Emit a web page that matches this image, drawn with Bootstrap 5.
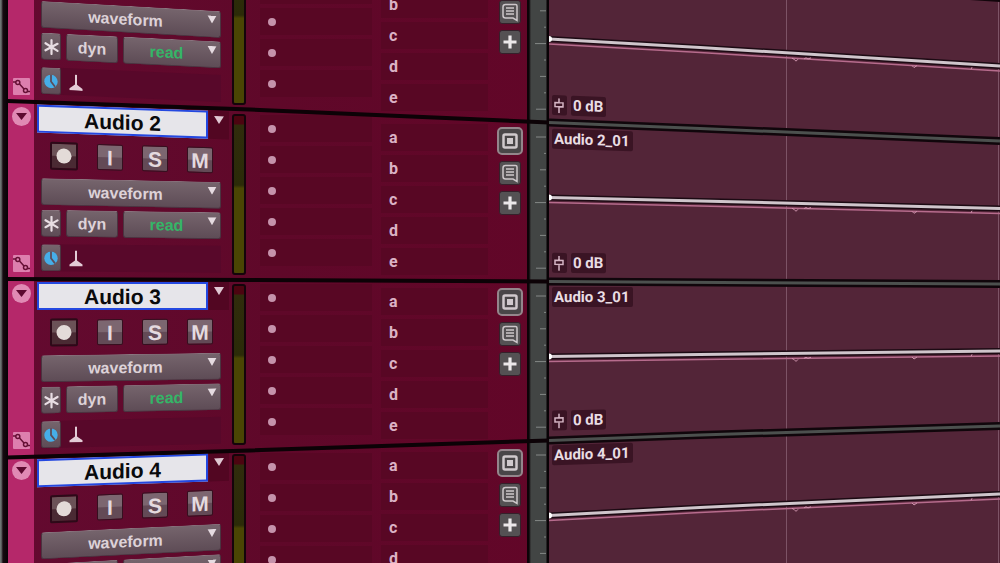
<!DOCTYPE html>
<html lang="en">
<head>
<meta charset="utf-8">
<meta name="viewport" content="width=device-width, initial-scale=1">
<title>Edit window</title>
<link href="https://cdn.jsdelivr.net/npm/bootstrap@5.3.0/dist/css/bootstrap.min.css" rel="stylesheet">
<style>
  body { background: #120309; font-family: "Liberation Sans", Arial, sans-serif; overflow: hidden; }
  .editor { height: 100vh; overflow: hidden; }
  .console { background: linear-gradient(90deg, #640a30, #5f0829 50%, #620628); }
  .edge-bar { width: 8px; background: linear-gradient(90deg, #6d7472 0 1px, #160a10 3px, #060205); }

  /* every column repeats its own track pitch */
  .strip { width: 26px; background: #b5286a; }
  .strip .lane { height: 177px; padding-bottom: 12px; }
  .strip-first { margin-top: -70px; }
  .controls { width: 195px; }
  .controls .lane { height: 174px; padding-left: 3px; }
  .controls-first { margin-top: -66px; }
  .head-gap { height: 72px; }
  .meters { width: 20px; padding-left: 3px; }
  .meters .lane { height: 170px; }
  .meters-first { margin-top: -56px; }
  .inserts { width: 131px; padding-left: 7px; }
  .inserts .lane { height: 169px; }
  .inserts-first { margin-top: -54px; }
  .sends { width: 116px; padding-left: 1px; }
  .sends .lane { height: 164px; }
  .sends-first { margin-top: -40px; }
  .tools { width: 31px; }
  .tools .lane { height: 161px; gap: 6px; }
  .tools-first { margin-top: -34px; }
  .ruler { width: 22px; background: linear-gradient(90deg, #0b0307 0 2px, #424544 4px 19px, #080205 20px); }
  .ruler svg { display: block; width: 22px; height: 159px; }
  .ruler-first { margin-top: -36px; }
  .clips { background: #532538; }
  .clips .lane { height: 157px; padding: 8px 0 6px 3px; }
  .clips-first { margin-top: -35px; }

  .round-toggle { width: 19px; height: 19px; background: #e08ab4; border-radius: 50%; }
  .auto-toggle { width: 17px; height: 17px; background: #dd7fae; border-radius: 1px; }
  .plain-btn { border: 0; padding: 0; line-height: 1; display: flex; align-items: center; justify-content: center; }

  .name-box { width: 171px; height: 28px; background: #e6e5ea; border: 2px solid #2448e0; font-size: 21px; font-weight: 700; color: #0a0a0c; line-height: 24px; padding: 1px 0 0; outline: 0; border-radius: 0; text-align: center; }
  .name-menu { width: 20px; height: 28px; background: #520622; align-items: flex-start; padding-top: 5px; }
  .keys { padding: 0 16px 0 13px; }
  .key { width: 26px; height: 26px; color: #e4dadf; font-size: 21px; font-weight: 700; border: 1px solid #35101f; border-radius: 2px; background: linear-gradient(#7c6670 0 48%, #634a56 52%); }
  .key-rec { background: linear-gradient(#6b5257 0 48%, #4a2a33 52%); border: 2px solid #2c0a18; width: 28px; height: 28px; }
  .ctl-row { width: 180px; margin-left: 4px; }
  .ctl-modes { gap: 5px; }
  .grey-box { height: 27px; border: 1px solid #4a3440; border-top-color: #8a7780; border-radius: 3px; background-color: #6a5660; background-image: linear-gradient(#75646c, #5e4c56); color: #ddd2d8; font-size: 16px; font-weight: 700; }
  .box-sm { width: 20px; }
  .box-md { width: 52px; }
  .drop { appearance: none; text-align: center; text-align-last: center; padding: 0 11px 0 0; line-height: 24px;
    background-image: url("data:image/svg+xml,%3Csvg xmlns='http://www.w3.org/2000/svg' viewBox='0 0 10 9'%3E%3Cpath d='M0 0h10L5 9z' fill='%23e6dbe1'/%3E%3C/svg%3E"), linear-gradient(#75646c, #5e4c56);
    background-repeat: no-repeat; background-position: right 3px top 4px, 0 0; background-size: 10px 8px, 100% 100%; }
  .drop-read { color: #35b567; }
  .clock-row { padding-top: 3px; }
  .clock-panel { background: #58082a; }
  .meter { width: 14px; height: 161px; border: 2px solid #14040a; border-radius: 3px; background: linear-gradient(#4c0410 0 8px, #302c0c 9px, #2b2b08 44%, #4a4503 46%, #4a4503); }

  .slot { height: 31px; }
  .slot-cell { height: 27px; background: #580724; }
  .pin { width: 8px; height: 8px; border-radius: 50%; background: #c593ab; }
  .send-letter { font: 700 16px/27px Roboto, "Liberation Sans", sans-serif; color: #dbb2c5; }
  .tool { width: 22px; height: 24px; background: #545153; border: 1px solid #35202a; border-radius: 3px; }
  .tool-io { width: 26px; height: 28px; background: #494648; border: 2px solid #94868c; border-radius: 5px; }

  .clip-tag { background: #3a1424; border-radius: 2px; color: #e9dde3; font: 700 15px/20px Roboto, "Liberation Sans", sans-serif; height: 20px; padding: 0 3px 0 2px; width: max-content; }
  .gain-row { width: max-content; }
  .clip-art { height: 563px; pointer-events: none; }
</style>
</head>
<body>
<main class="editor d-flex position-relative">
  <div class="console d-flex align-items-start flex-shrink-0 position-relative">
    <div class="edge-bar align-self-stretch"></div>
    <div class="strip align-self-stretch"><div class="strip-first" id="strip"></div></div>
    <div class="controls"><div class="controls-first" id="controls"></div></div>
    <div class="meters"><div class="meters-first" id="meters"></div></div>
    <div class="inserts"><div class="inserts-first" id="inserts"></div></div>
    <div class="sends"><div class="sends-first" id="sends"></div></div>
    <div class="tools"><div class="tools-first" id="tools"></div></div>
    <div class="ruler align-self-stretch"><div class="ruler-first" id="ruler"></div></div>
    <svg class="clip-art position-absolute top-0 start-0 w-100" viewBox="0 0 549 563" preserveAspectRatio="none" aria-hidden="true">
      <g fill="none" stroke="#0c0206" stroke-width="4">
        <path d="M7 101L250 109.500L549 122.500"/><path d="M7 279L250 280L549 281.500"/><path d="M7 457.500L250 450.500L549 440.500"/>
      </g>
    </svg>
  </div>
  <section class="clips flex-grow-1 position-relative overflow-hidden">
    <svg class="clip-art position-absolute top-0 start-0 w-100" viewBox="549 0 451 563" preserveAspectRatio="none" aria-hidden="true">
      <g stroke="#7d5366"><path d="M786.500 0V563M998.500 0V563"/></g>
      <path d="M970 -1L1000 1" stroke="#12050b" stroke-width="2"/>
      <g fill="none" stroke="#10060b" stroke-width="8">
        <path d="M549 122.500L700 128.500L1000 141"/><path d="M549 281.500L1000 284"/><path d="M549 440.500L700 435L1000 426"/>
      </g>
      <g fill="none" stroke="#4c504e" stroke-width="3">
        <path d="M549 122.500L700 128.500L1000 141"/><path d="M549 281.500L1000 284"/><path d="M549 440.500L700 435L1000 426"/>
      </g>
      <g id="curves" fill="none"></g>
    </svg>
    <div class="clips-first position-relative" id="clips"></div>
  </section>
</main>

<script src="https://cdn.jsdelivr.net/npm/bootstrap@5.3.0/dist/js/bootstrap.bundle.min.js"></script>
<script>
  // track 1 is scrolled half out at the top, track 4 runs out at the bottom
  const tracks = [
    { n: 1, head: false, sends: ['', 'b', 'c', 'd', 'e'], gain: true },
    { n: 2, head: true, sends: ['a', 'b', 'c', 'd', 'e'], gain: true },
    { n: 3, head: true, sends: ['a', 'b', 'c', 'd', 'e'], gain: true },
    { n: 4, head: true, sends: ['a', 'b', 'c', 'd'], gain: false, last: true }
  ];
  const fill = (id, draw) => { document.getElementById(id).innerHTML = tracks.map(draw).join(''); };

  fill('strip', ({ n }) => `
    <div class="lane d-flex flex-column align-items-center justify-content-between">
      <button class="plain-btn round-toggle" aria-label="Collapse track ${n}"><svg width="11" height="7" viewBox="0 0 11 7"><path d="M0 0h11L5.500 7z" fill="#5c0a30"/></svg></button>
      <button class="plain-btn auto-toggle" aria-label="Automation lanes ${n}"><svg width="17" height="17" viewBox="0 0 17 17" fill="none" stroke="#651035" stroke-width="1.500"><path d="M0 4h3M6.500 6L11 11M14 13.500h3"/><circle cx="4.800" cy="4.500" r="2"/><circle cx="12.500" cy="12.500" r="2"/></svg></button>
    </div>`);

  const head = n => `
      <div class="tilt d-flex justify-content-between">
        <input class="name-box" type="text" value="Audio ${n}" aria-label="Track ${n} name">
        <button class="plain-btn name-menu" aria-label="Track ${n} menu"><svg width="10" height="8" viewBox="0 0 10 8"><path d="M0 0h10L5 8z" fill="#e0c8d3"/></svg></button>
      </div>
      <div class="tilt keys d-flex align-items-center justify-content-between mt-2">
        <button class="plain-btn key key-rec" aria-label="Record ${n}"><svg width="16" height="16" viewBox="0 0 16 16"><circle cx="8" cy="8" r="7.500" fill="#e3dbd8"/></svg></button>
        <button class="plain-btn key">I</button>
        <button class="plain-btn key">S</button>
        <button class="plain-btn key">M</button>
      </div>
      <div class="pt-2"></div>`;
  fill('controls', ({ n, head: shown, last }) => `
    <div class="lane">
      ${shown ? head(n) : '<div class="head-gap"></div>'}
      <div class="tilt ctl-row"><select class="grey-box drop w-100 d-block" aria-label="View ${n}"><option>waveform</option></select></div>
      <div class="tilt ctl-row ctl-modes d-flex mt-1">
        <button class="plain-btn grey-box box-sm" aria-label="Freeze ${n}">${last ? '' : '<svg width="15" height="16" viewBox="0 0 15 16" stroke="#e8dde3" stroke-width="2.200" stroke-linecap="round"><path d="M7.500 1v14M1.500 4.500l12 7M13.500 4.500l-12 7"/></svg>'}</button>
        <button class="plain-btn grey-box box-md" aria-label="Dynamics ${n}">${last ? '' : 'dyn'}</button>
        <select class="grey-box drop drop-read flex-grow-1" aria-label="Automation mode ${n}"><option>${last ? '' : 'read'}</option></select>
      </div>
      <div class="tilt ctl-row clock-row mt-1"><div class="clock-panel d-flex align-items-center gap-2">
        <button class="plain-btn grey-box box-sm" aria-label="Timebase ${n}"><svg width="14" height="14" viewBox="0 0 14 14"><circle cx="7" cy="7" r="6.700" fill="#46aee8"/><path d="M7 0v7l4 5" fill="none" stroke="#5b4d5a" stroke-width="1.800"/></svg></button>
        <svg width="14" height="16" viewBox="0 0 14 16"><path d="M6 0h2v10l5.500 4v2H.5v-2L6 10z" fill="#e3cbd6"/></svg>
      </div></div>
    </div>`);

  fill('meters', () => `<div class="lane"><div class="meter"></div></div>`);

  fill('inserts', () => `<div class="lane">${'abcde'.split('').map(() =>
    `<div class="slot"><div class="slot-cell d-flex align-items-center ps-2 ms-1 me-2"><span class="pin"></span></div></div>`).join('')}</div>`);
  fill('sends', ({ sends }) => `<div class="lane">${sends.map(s =>
    `<div class="slot"><div class="slot-cell send-letter ps-2 me-2">${s}</div></div>`).join('')}</div>`);

  fill('tools', ({ n }) => `
    <div class="lane d-flex flex-column align-items-center pe-1">
      <button class="plain-btn tool-io" aria-label="Routing ${n}"><svg width="16" height="16" viewBox="0 0 16 16"><rect x="1.500" y="1.500" width="13" height="13" rx="1.500" fill="#494648" stroke="#cfc9cc" stroke-width="2.500"/><rect x="5" y="5" width="6" height="6" fill="#cfc9cc"/></svg></button>
      <button class="plain-btn tool" aria-label="Comments ${n}"><svg width="18" height="19" viewBox="0 0 18 19" fill="none" stroke="#cdc7ca" stroke-width="1.500"><path d="M4.500 1.500h10q1.500 0 1.500 1.500V17.500l-4-2.500h-7.500q-2.500 0-2.500-2.500V4q0-2.500 2.500-2.500zM5 5h8M5 8h8M5 11h8"/></svg></button>
      <button class="plain-btn tool" aria-label="Add ${n}"><svg width="14" height="14" viewBox="0 0 14 14" stroke="#ece8ea" stroke-width="3.200"><path d="M7 .5v13M.5 7h13"/></svg></button>
    </div>`);

  const ticks = [10, 2, 6, 2, 11, 2, 6, 2, 10].map((length, i) =>
    `<path d="M${19 - length} ${14 + i * 16.4}H19"/>`).join('');
  fill('ruler', () => `<svg viewBox="0 0 22 159" stroke="#858987" aria-hidden="true">${ticks}</svg>`);

  fill('clips', ({ n, gain, head: shown }) => `
    <div class="lane d-flex flex-column ${shown ? 'justify-content-between' : 'justify-content-end'}">
      ${shown ? `<div class="tilt clip-tag">Audio ${n}_01</div>` : ''}
      ${gain ? `<div class="tilt gain-row d-flex gap-1">
        <span class="clip-tag d-flex align-items-center"><svg width="10" height="15" viewBox="0 0 10 15" fill="none" stroke="#d5b5c4" stroke-width="1.500"><path d="M5 0v4M5 9v6M1 4.500h8v4H1z"/></svg></span>
        <span class="clip-tag">0 dB</span>
      </div>` : ''}
    </div>`);

  // volume curves: height at the left edge, at x 700 and at the right edge
  const curves = [[39, 47.5, 66], [197.5, 201, 208.5], [356.5, 354.5, 351], [515.5, 507.5, 494]];
  document.getElementById('curves').innerHTML = curves.map(([a, b, c]) => {
    const line = d => `M549 ${a + d}L700 ${b + d}L1000 ${c + d}`;
    const at = x => b + (c - b) * (x - 700) / 300 + 5;
    return `<path d="${line(0)}" stroke="#1c0a13" stroke-width="6"/>
      <path d="${line(5)}" stroke="#b76c8d" stroke-width="1.500"/>
      <path d="${line(0)}" stroke="#cfc5cb" stroke-width="3"/>
      <path d="M792 ${at(792)}l2 1l2 2l2-2M804 ${at(804)}l2-1l2 1l3-1M912 ${at(912)}l2 2l3-2M971 ${at(971)}l1-2" stroke="#cf94ad"/>
      <circle cx="549" cy="${a}" r="3" fill="#fff"/>`;
  }).join('');

  // rows lean towards the horizon at y 300
  document.querySelectorAll('.tilt').forEach(row => {
    const box = row.getBoundingClientRect();
    const slope = (300 - (box.top + box.height / 2)) * 0.0002;
    row.style.transform = `skewY(${Math.atan(slope)}rad)`;
  });
</script>
</body>
</html>
